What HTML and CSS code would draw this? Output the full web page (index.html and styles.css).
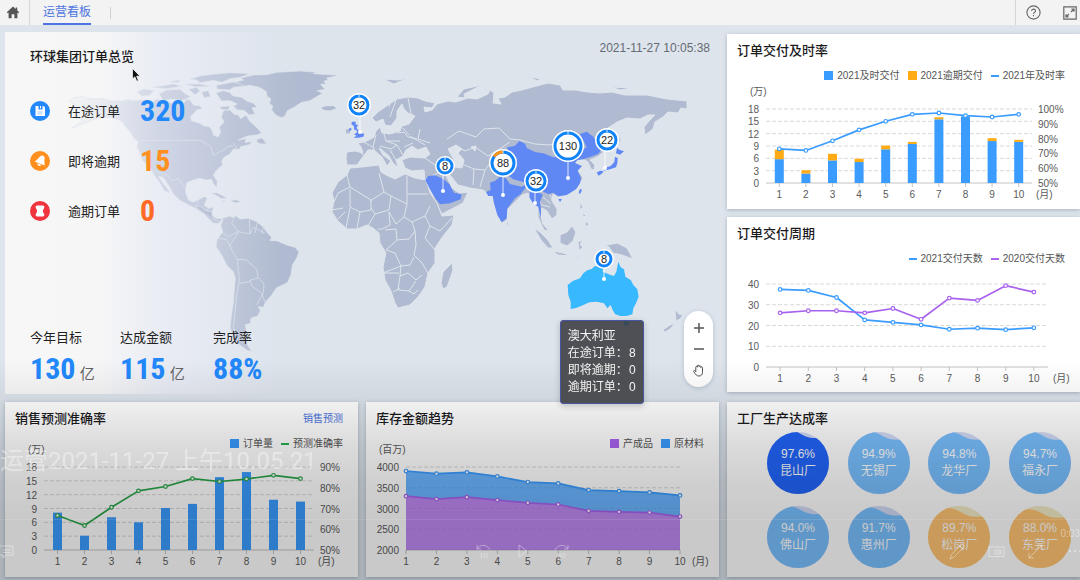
FILE: index.html
```html
<!DOCTYPE html>
<html lang="zh-CN">
<head>
<meta charset="utf-8">
<title>运营看板</title>
<link rel="stylesheet" href="styles.css">
</head>
<body>
<header class="topbar">
  <button class="icon-button home" type="button" aria-label="首页">
    <svg width="14" height="13" viewBox="0 0 14 13"><path d="M7 .6 .8 6.2l.9 1L2.600 6.500V12.200H5.600V8.300H8.400V12.200H11.400V6.500l.9.7.9-1L11.200 4.300V1.500H9.700V3Z" fill="#555"/></svg>
  </button>
  <nav class="tabs"><a class="tab" href="#board">运营看板</a></nav>
  <div class="tools">
    <button class="icon-button" type="button" aria-label="帮助">
      <svg width="15" height="15" viewBox="0 0 15 15" fill="none" stroke="#666" stroke-width="1.100"><circle cx="7.500" cy="7.500" r="6.600"/><path d="M5.600 6c0-2.600 3.900-2.500 3.900-.1 0 1.400-2 1.500-2 3M7.500 10v1.300"/></svg>
    </button>
    <button class="icon-button" type="button" aria-label="全屏">
      <svg width="14" height="14" viewBox="0 0 14 14" fill="none" stroke="#666" stroke-width="1.200"><path d="M.8.8h12.400v12.400H.8ZM8 6l3-3M8.300 3H11v2.700M6 8l-3 3M3 8.300V11h2.700"/></svg>
    </button>
  </div>
</header>

<main class="board" id="board">
  <section class="overview">
    <svg class="world" viewBox="5 32 714 362" role="img" aria-label="全球订单分布">
      <defs>
        <linearGradient id="land-west" gradientUnits="userSpaceOnUse" x1="180" y1="0" x2="900" y2="0">
          <stop offset="0" stop-color="#b0bad0" stop-opacity="0"/>
          <stop offset=".4" stop-color="#b0b9d2" stop-opacity=".42"/>
          <stop offset="1" stop-color="#b0bad0"/>
        </linearGradient>
        <linearGradient id="land-south" gradientUnits="userSpaceOnUse" x1="-100" y1="0" x2="310" y2="0">
          <stop offset="0" stop-color="#b0bad0" stop-opacity=".2"/>
          <stop offset="1" stop-color="#b0bad0"/>
        </linearGradient>
      </defs>

      <g class="land-west" transform="scale(.33333)">
        <path d="M205 302 228 292 250 290 275 297 305 295 330 302 365 303 385 299 400 302 430 300 455 306 470 298 500 302 515 310 540 305 552 308 560 298 572 302 580 315 600 318 608 325 590 330 580 342 572 348 574 362 600 370 612 378 628 380 636 390 640 405 655 411 662 395 658 382 672 366 664 352 668 338 672 331 690 330 702 342 715 345 722 356 738 345 748 362 768 380 785 399 770 405 742 408 715 420 738 416 735 428 756 424 748 434 722 440 718 448 700 447 690 462 672 472 665 484 668 494 650 510 640 525 652 545 650 563 640 550 635 538 618 540 600 535 580 540 560 548 556 575 565 600 580 607 600 597 612 590 622 594 612 615 625 625 640 622 636 645 648 655 667 656 658 668 642 660 625 645 605 638 585 624 560 612 538 600 520 582 505 555 490 532 474 528 488 548 505 570 510 578 493 572 478 545 460 522 450 500 428 482 420 460 412 440 415 425 402 415 392 396 378 382 364 362 330 352 300 352 272 362 235 378 215 385 236 370 250 360 228 352 238 340 225 332 242 322 222 312Z"/>
        <path d="M648 279 670 272 688 277 700 288 725 292 740 303 760 310 772 322 756 323 765 342 748 345 732 331 712 330 700 318 712 312 690 302 665 303ZM570 238 600 228 640 223 690 218 750 221 720 232 690 236 665 247 640 241 600 248 590 240ZM650 256 700 246 750 257 700 262 690 270 650 267ZM478 282 500 270 540 268 556 282 572 290 545 302 515 297 490 302ZM412 275 432 267 462 272 448 286 425 288ZM458 262 520 252 545 259 500 266ZM566 268 590 262 600 274 585 284ZM605 276 625 272 632 290 612 293ZM660 320 690 318 684 330 664 328ZM510 245 540 240 535 248ZM556 252 600 252 630 259 585 260Z"/>
        <path d="M705 246 730 240 722 234 760 225 800 224 830 217 900 213 950 217 940 221 1018 226 980 234 985 241 972 243 978 252 962 253 975 268 952 272 968 280 950 290 930 302 905 307 885 320 862 332 855 348 845 353 828 346 815 330 818 318 808 310 812 296 802 290 798 274 778 262 750 256 735 258Z"/>
        <path d="M962 323 975 318 1000 317 1012 325 990 333 970 330ZM770 418 786 414 800 431 785 432 772 428ZM632 580 650 578 682 594 665 596 648 586ZM690 600 712 600 722 606 705 609ZM663 602 677 604 670 607Z"/>
        <path class="border" d="M415 421H600L632 438 640 466 668 452 682 440 700 438M330 302 365 362 402 412M455 512 500 525 515 542 535 536 556 565M585 620 598 602M612 640 625 626M700 428 712 448"/>
      </g>

      <g class="land-south" transform="translate(180 50) scale(.33333)">
        <path d="M45 470 60 468 75 480 95 485 100 508 118 515 128 505 150 498 160 503 165 496 180 507 205 505 230 515 250 531 262 548 275 562 270 572 290 572 320 585 345 592 357 605 350 625 337 645 333 675 322 698 290 713 275 735 256 757 250 772 235 770 241 782 233 798 212 805 212 820 195 825 200 845 190 860 200 880 215 905 200 900 178 884 160 862 150 832 155 790 160 760 163 720 166 685 160 665 140 645 125 615 108 590 112 567 128 546 122 525 130 508 115 520 100 520 80 500 70 488Z"/>
        <path class="border" d="M165 498 155 520 175 545 210 552 208 505M210 552 220 532 255 550M232 516 225 550M250 532 245 552M175 548 150 585 155 600 172 628 200 630 230 658 235 684 210 690 215 708 245 730 255 756M112 565 140 568 150 590M172 628 178 690 170 735 165 790 160 830 175 880M178 700 210 695M235 684 252 702 250 728 230 765M128 548 145 560 175 545"/>
      </g>

      <g class="land">
        <path d="M347 152 355 151 363 153 361 147 358 143 364 142 369 140 374 137 376 131 380 127 382 133 390 134 400 131 402 126 409 124 415 116 408 113 404 109 402 104 397 111 397 118 391 126 385 125 383 119 376 122 372 118 378 112 388 105 397 99 408 97 418 98 425 101 435 103 432 108 424 107 425 112 432 110 437 104 448 101 456 102 468 98 477 99 488 94 490 90 494 93 493 103 501 104 498 98 505 97 512 92 522 90 533 87 548 83 560 85 563 90 575 90 587 92 600 93 612 92 625 95 647 95 667 99 687 101 687 109 681 108 678 113 668 112 663 117 655 122 653 129 645 135 644 127 650 120 655 115 648 115 640 119 627 118 617 122 608 128 611 134 612 141 608 148 600 155 597 157 590 160 595 165 594 170 591 169 588 162 583 159 575 162 582 166 578 170 583 178 577 188 567 195 558 197 553 194 552 201 557 209 557 215 552 219 547 211 542 208 540 213 543 224 549 231 544 230 538 217 538 207 533 203 528 193 522 195 517 200 507 210 507 220 502 223 495 207 492 195 487 193 483 190 470 188 458 185 450 175 445 173 452 188 459 193 468 192 463 203 442 214 438 207 431 192 425 180 424 170 412 171 405 168 402 160 410 157 425 158 430 154 426 147 418 150 412 146 406 150 403 156 396 160 398 168 393 163 389 156 382 150 379 148 383 155 391 161 387 166 382 157 374 150 368 150 362 158 357 165 347 165 346 158Z"/>
        <path d="M457 97 464 89 482 85 474 89 464 94 465 98ZM530 77 541 79 537 81ZM611 87 632 88 620 90ZM383 79 398 80 408 78 401 81 394 84ZM345 129 351 129 350 134 346 134ZM618 132 621 140 620 147ZM507 220 509 224 507 227ZM534 228 540 232 548 240 553 248 548 248 541 240ZM553 251 563 253 572 256 558 255ZM560 235 567 232 572 226 576 232 573 241 567 246 560 243ZM578 242 584 240 580 244 583 248 579 250ZM600 242 607 245 617 243 627 248 633 259 622 255 613 253 609 247ZM580 202 583 207 580 210ZM585 221 589 224 586 227ZM583 213 586 216 583 217ZM675 309 679 314 683 315 680 319 676 321ZM663 330 670 325 675 323 670 329 665 332ZM574 256 580 257 576 258Z"/>
        <path d="M350 168 362 167 379 165 381 172 388 176 395 179 405 174 415 178 426 180 430 193 437 203 442 216 454 215 452 225 443 236 435 248 435 263 428 273 425 287 418 297 410 305 398 308 395 303 391 291 385 280 383 267 386 253 380 243 379 233 373 228 367 225 357 229 347 229 338 221 332 212 334 200 332 193 338 182 347 175ZM452 263 453 270 447 287 443 289 441 283 443 272Z"/>
        <path class="border" d="M347 175 350 187 338 193 334 202M350 187 371 200 371 210 360 212 350 207 350 189M379 173 384 192 370 201M384 192 391 196 407 204 407 176M391 196 389 210 375 214 371 208M407 194H428M407 204 404 217 412 222 425 216 430 206M404 217 396 224 389 212M389 212 390 225 382 229 378 229M375 214 368 226M360 212 357 228M350 208 346 228M345 212 338 219M332 210 343 208M425 216 430 226 440 231 452 218M430 226 425 238 435 250M412 222 415 231 409 239 397 240 396 229 385 230M397 240 386 250 395 253 401 266 383 273M415 231 416 245 414 255 422 263 428 273M401 266 410 265 414 257M401 266 400 276 408 273 416 280 422 275M400 276 398 290 409 291 416 281M393 292 400 288M383 273H399M409 291 414 294 418 290"/>
        <path class="border" d="M361 153 366 157M364 142 374 148 374 152M376 135 373 147M384 134 386 141 397 145 391 149 380 146M397 133 404 132 408 137 417 139M386 141 400 141M403 128 409 135M389 107 392 98M408 98 411 114M396 100 390 117M404 147 413 143M397 145 403 155M390 150 396 160M410 136 425 145M420 129 418 139 430 143M447 139 459 131 476 137 484 129 499 128 510 139 520 140 535 144 550 145 565 140 583 137M455 145 465 151 475 147 488 156 498 150 510 142M462 164 474 169 485 170 493 159M474 169 473 185M485 170 480 187M425 158 438 167 450 170M425 180 436 174 443 169M442 203 451 201 462 193M535 196 542 205 550 207M543 197 551 204M550 195 554 204"/>
        <path class="water" d="M448 149 456 145 462 149 458 153 464 160 462 168 455 167 454 160ZM471 147 476 146 475 151Z"/>
      </g>

      <g class="active" transform="translate(420 60) scale(.33333)">
        <path d="M262 262 285 257 298 243 316 252 320 264 345 276 370 280 400 292 440 290 472 278 500 262 480 222 500 215 520 230 532 250 548 262 535 282 512 290 490 298 472 300 465 310 486 318 473 332 483 355 480 370 468 388 440 405 415 409 400 398 385 402 370 395 362 385 345 378 310 366 280 358 262 345 245 322 238 300 265 285Z"/>
        <path d="M210 368 226 362 240 350 258 355 270 372 305 380 320 372 318 382 302 402 285 415 262 445 260 475 245 487 232 465 222 430 218 408 205 408 198 396 212 390Z"/>
        <path d="M330 392 345 380 356 396 368 404 360 425 363 450 363 475 355 440 340 432 328 412Z"/>
        <path d="M16 360 25 348 45 346 70 357 88 372 102 398 125 403 122 418 90 430 60 433 48 418 30 388Z"/>
        <path d="M591 264 598 269 612 274 600 284 588 280ZM585 290 593 294 592 310 588 322 570 328 550 332 560 322 572 318 583 306ZM530 338 540 332 551 334 545 341 536 347ZM481 386 486 390 480 403 476 397ZM415 417 426 417 420 426Z"/>
        <path d="M-204 185-192 185-194 192-186 196-191 204-182 214-178 219-167 222-170 230-184 233-200 233-190 227-198 223-190 218-189 212-198 208-198 199-206 192ZM-214 206-206 204-206 211-213 212Z"/>
      </g>
      <path class="hovered" transform="translate(500 230) scale(.33333)" d="M203 165 218 153 240 145 250 130 262 121 275 117 285 108 300 112 312 112 308 125 330 134 342 138 349 125 355 95 362 112 372 118 376 140 392 150 400 165 412 178 416 200 408 220 400 235 397 253 380 258 360 258 345 252 338 240 332 225 322 235 312 220 290 215 268 217 245 227 228 234 212 237 212 215 205 195ZM370 272 380 275 388 272 387 282 380 288 373 285Z"/>
      <g id="markers"></g>
    </svg>

    <div class="overview-head">
      <h1>环球集团订单总览</h1>
      <time datetime="2021-11-27T10:05:38">2021-11-27 10:05:38</time>
    </div>
    <ul class="orders">
      <li>
        <svg width="20" height="20" viewBox="0 0 20 20"><circle cx="10" cy="10" r="10" fill="#2288fb"/><path d="M5.500 5h3v3.500h4V5h1L15 6.500V15H5.500ZM10 5h1v2.500h-1Z" fill="#fff"/><path d="M7.500 11h5.500M7.500 12.800h4.500" stroke="#8fc0fb" stroke-width=".8"/></svg>
        <span>在途订单</span><strong class="figure">320</strong>
      </li>
      <li>
        <svg width="20" height="20" viewBox="0 0 20 20"><circle cx="10" cy="10" r="10" fill="#ff8f1f"/><path d="M12.500 4.500c2 .3 2.300 2.200 2 4.300-.3 2 .2 4 .2 5.700L4.500 10.500c3-.8 4-5.500 8-6ZM7.300 12.300l4 1.700c-1 2-4 1-4-1.700Z" fill="#fff"/></svg>
        <span>即将逾期</span><strong class="figure amber">15</strong>
      </li>
      <li>
        <svg width="20" height="20" viewBox="0 0 20 20"><circle cx="10" cy="10" r="10" fill="#f0343f"/><path d="M7 4.500h6c1.500 0 1.800 2 .8 3.200-1.300 1.600-1.300 3 0 4.600 1 1.200.7 3.200-.8 3.200H7c-1.500 0-1.800-2-.8-3.200 1.300-1.600 1.300-3 0-4.600C5.200 6.500 5.500 4.500 7 4.500Z" fill="#fff"/></svg>
        <span>逾期订单</span><strong class="figure red">0</strong>
      </li>
    </ul>
    <dl class="goals">
      <div><dt>今年目标</dt><dd><strong class="figure">130</strong> 亿</dd></div>
      <div><dt>达成金额</dt><dd><strong class="figure">115</strong> 亿</dd></div>
      <div><dt>完成率</dt><dd><strong class="figure">88%</strong></dd></div>
    </dl>

    <div class="map-tools">
      <button type="button" aria-label="放大"><svg width="12" height="12" viewBox="0 0 12 12"><path d="M1 6h10M6 1v10" stroke="#555" stroke-width="1.500"/></svg></button>
      <button type="button" aria-label="缩小"><svg width="12" height="12" viewBox="0 0 12 12"><path d="M1 6h10" stroke="#555" stroke-width="1.500"/></svg></button>
      <button type="button" aria-label="拖动"><svg width="13" height="13" viewBox="0 0 13 13" fill="none" stroke="#555"><path d="M3.800 7.800V3.200c0-1.200 1.600-1.200 1.600 0V2c0-1.200 1.700-1.200 1.700 0v.6c0-1.200 1.700-1.200 1.700 0v1c0-1.200 1.700-1 1.700.2v4.500c0 2.500-1.500 3.700-3.500 3.700-2.500 0-3-1.200-5.200-4.200-.7-1 .6-1.800 1.300-1Z"/></svg></button>
    </div>
    <div class="tooltip">
      <p>澳大利亚</p>
      <p><span>在途订单：</span><span>8</span></p>
      <p><span>即将逾期：</span><span>0</span></p>
      <p><span>逾期订单：</span><span>0</span></p>
    </div>
    <svg class="cursor" width="9" height="14" viewBox="0 0 9 14"><path d="M.5.500V11l2.400-2.200 1.800 4.400 1.700-.7L4.600 8.200H8Z" fill="#111" stroke="#fff" stroke-width=".7"/></svg>
  </section>

  <div class="side">
    <section class="card">
      <header><h2>订单交付及时率</h2></header>
      <div class="legend"><span class="key square blue">2021及时交付</span><span class="key square yellow">2021逾期交付</span><span class="key dash blue">2021年及时率</span></div>
      <svg class="chart" id="on-time" viewBox="0 0 353 125"></svg>
    </section>
    <section class="card">
      <header><h2>订单交付周期</h2></header>
      <div class="legend"><span class="key dash blue">2021交付天数</span><span class="key dash purple">2020交付天数</span></div>
      <svg class="chart" id="cycle" viewBox="0 0 353 125"></svg>
    </section>
  </div>

  <section class="card">
    <header><h2>销售预测准确率</h2><a href="#forecast">销售预测</a></header>
    <div class="legend"><span class="key square blue">订单量</span><span class="key dash green">预测准确率</span></div>
    <svg class="chart" id="forecast" viewBox="0 0 353 125"></svg>
  </section>
  <section class="card">
    <header><h2>库存金额趋势</h2></header>
    <div class="legend"><span class="key square purple">产成品</span><span class="key square blue">原材料</span></div>
    <svg class="chart" id="stock" viewBox="0 0 353 125"></svg>
  </section>
  <section class="card">
    <header><h2>工厂生产达成率</h2></header>
    <div class="plants" id="plants"></div>
  </section>
</main>

<div class="player">
  <p class="clip-title">运营2021-11-27 上午10.05.21</p>
  <div class="progress"></div>
  <span class="remaining">0:03</span>
  <div class="controls">
    <button type="button" aria-label="字幕"><svg width="20" height="16" viewBox="0 0 20 16"><path d="M0 2h13v9H6l-3 3v-3H0M3 6h8M3 8.500h8"/></svg></button>
    <div class="transport">
      <button type="button" aria-label="后退"><svg width="17" height="17" viewBox="0 0 17 17"><path d="M2 6c3-5 10-5 13 1M2 2v4h4"/><text x="4" y="15">10</text></svg></button>
      <button type="button" aria-label="播放"><svg width="17" height="17" viewBox="0 0 17 17"><path d="M5 2v12l8-6Z"/></svg></button>
      <button type="button" aria-label="前进"><svg width="17" height="17" viewBox="0 0 17 17"><path d="M15 6C12 1 5 1 2 7M15 2v4h-4"/><text x="4" y="15">30</text></svg></button>
    </div>
    <div class="extras">
      <button type="button" aria-label="编辑"><svg width="17" height="17" viewBox="0 0 17 17"><path d="M1 16l1.500-4.500L12 2c2-1.500 4 .8 2.500 2.700L5 14ZM11 3l3 3"/></svg></button>
      <button type="button" aria-label="画中画"><svg width="17" height="17" viewBox="0 0 17 17"><path d="M1 4h15v9.500H1ZM7 7h6v4H7ZM9 9h3"/></svg></button>
      <button type="button" aria-label="全屏播放"><svg width="17" height="17" viewBox="0 0 17 17"><path d="M2 15 15 2M10 2h5v5M2 10v5h5"/></svg></button>
      <button type="button" aria-label="更多"><svg width="17" height="17" viewBox="0 0 17 17"><path d="M3 8h2M8 8h2M13 8h2" stroke-width="2"/></svg></button>
    </div>
  </div>
</div>
<script src="charts.js"></script>
</body>
</html>
```
FILE: styles.css
```css
* { box-sizing: border-box; }
body, h1, h2, p, ul, dl, dd { margin: 0; padding: 0; }
body {
  display: flex;
  flex-direction: column;
  min-height: 100vh;
  background: #dde4ec;
  color: #222;
  font: 12px/18px "Liberation Sans", "Noto Sans CJK SC", sans-serif;
}
button { padding: 0; border: 0; background: none; color: inherit; font: inherit; }
button svg { display: block; }
a { text-decoration: none; }
h1, h2 { font-size: 13px; line-height: 18px; font-weight: 500; color: #1b1b1d; }

.topbar { display: flex; height: 25px; background: #f3f3f3; }
.icon-button { display: flex; align-items: center; justify-content: center; }
.home { width: 30px; padding-right: 3px; border-right: 1px solid #d6d6d6; }
.tabs { display: flex; align-items: center; margin-left: 13px; }
.tabs::after { content: ""; width: 1px; height: 12px; margin-left: 19px; background: #d0d0d0; }
.tab { height: 25px; line-height: 24px; color: #4d74e0; border-bottom: 2px solid #4d74e0; }
.tools { display: flex; gap: 22px; margin-left: auto; padding: 0 3px 0 10px; border-left: 1px solid #d6d6d6; }

.board {
  flex: 1;
  display: grid;
  grid-template-columns: repeat(3, minmax(0, 1fr));
  grid-template-rows: 362fr 175fr;
  gap: 8px;
  padding: 7px 0 3px 5px;
}
.overview {
  grid-column: span 2;
  position: relative;
  display: flex;
  flex-direction: column;
  padding: 7px 9px 5px 25px;
  background: linear-gradient(90deg, #f7f7f7, #f6f6f7 95px, #e9ecf4 155px, #e5e9f2 200px, #dde4ec 275px);
}
.world { position: absolute; inset: 0; width: 100%; height: 100%; }
.world path { stroke: #dfe5ed; stroke-width: 1; }
.world g[transform] path { stroke-width: 2; }
.land path { fill: #b0bad0; }
.land-west path { fill: url(#land-west); }
.land-south path { fill: url(#land-south); }
.world .border { fill: none; }
.world .water { fill: #dde4ec; }
.world .active path { fill: #5f88f5; stroke: none; }
.world .hovered { fill: #38b8ff; stroke: none; }
.world .pin { stroke: #fff; stroke-opacity: .8; }
.world .pin-dot { fill: #fff; }
.world .halo { fill: #fff; }
.world .ring { fill: none; stroke: #1183fa; stroke-width: 3; }
.world .late { fill: none; stroke: #ff9416; stroke-width: 3; }
.world text { font-size: 11px; text-anchor: middle; fill: #222; }

.overview-head { position: relative; display: flex; justify-content: space-between; align-items: flex-start; }
.overview-head h1 { margin-top: 9px; }
time { color: #666b73; }
.orders { position: relative; display: grid; gap: 22px; margin-top: 31px; list-style: none; }
.orders li { display: flex; align-items: center; height: 28px; font-size: 13px; }
.orders span { margin: 2px 20px 0 18px; }
.figure { font: bold 30px/28px "Roboto Condensed", "Liberation Sans Narrow", "Liberation Sans", sans-serif; color: #2288fb; }
.figure.amber { color: #ff8f1f; }
.figure.red { color: #ff6a26; }
.goals { position: relative; display: grid; grid-template-columns: 90px 93px auto; margin-top: auto; font-size: 13px; }
.goals dd { margin-top: 8px; font-size: 15px; line-height: 30px; color: #666; white-space: nowrap; }

.map-tools {
  position: absolute;
  right: 6px;
  bottom: 7px;
  display: flex;
  flex-direction: column;
  gap: 1px;
  padding: 7px 4px;
  border-radius: 15px;
  background: #fff;
  box-shadow: 0 1px 4px rgba(60, 80, 110, .25);
}
.map-tools button { display: grid; place-items: center; width: 21px; height: 20px; }
.tooltip {
  position: absolute;
  left: 77.7%;
  top: 79.5%;
  z-index: 3;
  width: 84px;
  padding: 7px;
  border: 1px solid #4656a0;
  border-radius: 3px;
  background: rgba(56, 56, 59, .86);
  color: #f4f4f4;
  line-height: 17px;
  box-shadow: 0 2px 6px rgba(0, 0, 0, .2);
}
.tooltip p { display: flex; justify-content: space-between; white-space: nowrap; }
.tooltip span:first-child { width: 56px; }
.cursor { position: absolute; left: 127px; top: 36px; }

.side { display: flex; flex-direction: column; gap: 8px; padding: 2px 0; }
.card { flex: 1; display: flex; flex-direction: column; background: #fff; box-shadow: 0 1px 4px rgba(70, 85, 110, .35); }
.card header { display: flex; justify-content: space-between; align-items: center; height: 33px; padding: 0 15px 0 10px; }
.card header a { font-size: 10px; color: #4d74e0; }
.legend { display: flex; justify-content: flex-end; gap: 8px; height: 17px; padding-right: 15px; font-size: 10px; line-height: 17px; color: #555; }
.key { display: flex; align-items: center; gap: 4px; }
.key::before { content: ""; width: 9px; height: 9px; background: currentColor; }
.key.dash::before { width: 8px; height: 2px; }
.key.blue::before { background: #3a9cff; }
.key.yellow::before { background: #ffab15; }
.key.purple::before { background: #aa63f0; }
.key.green::before { background: #29b04c; }

.chart { display: block; flex: 1; width: 100%; min-height: 0; overflow: visible; }
.chart text { font-size: 10px; fill: #5a5a5a; }
.chart .end { text-anchor: end; }
.chart .mid { text-anchor: middle; }
.chart .grid { stroke: #d9d9d9; stroke-dasharray: 4 2; }
.chart .axis { stroke: #c4c4c4; }
.chart polyline { fill: none; stroke-width: 1.7; stroke-linejoin: round; }

.plants { display: grid; grid-template-columns: repeat(4, 62px); justify-content: space-between; row-gap: 12px; margin-top: -3px; padding: 0 9px 0 40px; }
.plant { position: relative; display: flex; flex-direction: column; align-items: center; justify-content: center; height: 62px; border-radius: 50%; overflow: hidden; color: #fff; line-height: 17px; }
.plant svg { position: absolute; inset: 0; width: 100%; height: 100%; }
.plant span { position: relative; }

.player {
  position: fixed;
  inset: auto 0 0;
  z-index: 2;
  display: flex;
  flex-direction: column;
  height: 220px;
  padding-top: 86px;
  pointer-events: none;
  color: rgba(255, 255, 255, .38);
  background: linear-gradient(rgba(0, 0, 0, 0), rgba(0, 0, 0, .06) 42px, rgba(0, 0, 0, .14) 85px, rgba(0, 0, 0, .19) 125px, rgba(0, 0, 0, .21) 160px);
}
.clip-title { font: 24px/30px Roboto, "Noto Sans CJK SC", sans-serif; white-space: nowrap; }
.progress { height: 1px; margin-top: 43px; background: rgba(255, 255, 255, .1); }
.remaining { align-self: flex-end; margin-top: 5px; font-size: 10px; }
.controls { display: grid; grid-template-columns: 1fr auto 1fr; align-items: center; }
.controls svg { fill: none; stroke: currentColor; }
.controls text { font-size: 8px; fill: currentColor; stroke: none; }
.transport, .extras { display: flex; gap: 22px; }
.transport { margin-right: 36px; }
.extras { justify-self: end; margin-right: -3px; }
```
FILE: charts.js
```javascript
const BLUE = '#3a9cff', YELLOW = '#ffab15', PURPLE = '#a862ee', GREEN = '#29a549';

const scale = (v, c, range) => c.bottom - (v - range[0]) / (range[1] - range[0]) * (c.bottom - c.top);
const text = (x, y, s, cls = '') => `<text x="${x}" y="${y}" class="${cls}">${s}</text>`;

function xAt(c, i) {
  const width = c.right - c.left;
  return c.edge ? c.left + width / 9 * i : c.left + width / 10 * (i + 0.5);
}

function frame(c) {
  let out = '';
  for (let v = c.range[0]; v <= c.range[1]; v += c.step) {
    const y = scale(v, c, c.range);
    out += `<line class="${v === c.range[0] ? 'axis' : 'grid'}" x1="${c.left}" x2="${c.right}" y1="${y}" y2="${y}"/>`;
    out += text(c.left - 7, y + 4, v, 'end');
  }
  if (c.percent) {
    for (let v = c.percent[0]; v <= c.percent[1]; v += 10) {
      out += text(c.right + 6, scale(v, c, c.percent) + 4, v + '%');
    }
  }
  for (let i = 0; i < 10; i++) {
    const x = xAt(c, i);
    out += `<line class="axis" x1="${x}" x2="${x}" y1="${c.bottom}" y2="${c.bottom + 4}"/>`;
    out += text(x, c.bottom + 15, i + 1, 'mid');
  }
  out += text(c.monthX, c.bottom + 15, '(月)');
  if (c.unit) out += text(c.unitX, c.unitY, c.unit);
  return out;
}

function bars(c, values, color, from = []) {
  return values.map((v, i) => {
    const y = scale(v, c, c.range), base = scale(from[i] || 0, c, c.range);
    return `<rect x="${xAt(c, i) - 4.5}" y="${y}" width="9" height="${base - y}" fill="${color}"/>`;
  }).join('');
}

function line(c, values, color, range = c.range) {
  const pts = values.map((v, i) => [xAt(c, i), scale(v, c, range)]);
  return `<polyline points="${pts.join(' ')}" stroke="${color}"/>` +
    pts.map(([x, y]) => `<circle cx="${x}" cy="${y}" r="1.8" fill="#fff" stroke="${color}" stroke-width="1.2"/>`).join('');
}

function area(c, values, floor, color) {
  const up = values.map((v, i) => [xAt(c, i), scale(v, c, c.range)]);
  const down = floor.map((v, i) => [xAt(c, i), scale(v, c, c.range)]).reverse();
  return `<polygon points="${up.concat(down).join(' ')}" fill="${color}" fill-opacity=".75"/>`;
}

const draw = (id, s) => { document.getElementById(id).innerHTML = s; };

const onTime = { left: 39, right: 305, top: 25, bottom: 99, range: [0, 18], step: 3, percent: [50, 100], monthX: 309, unit: '(万)', unitX: 23, unitY: 11 };
const good = [5.8, 2.3, 5.5, 5.1, 8.2, 9.5, 15.5, 16.2, 10.2, 10];
const total = [8.1, 3.1, 7.1, 5.9, 9.1, 10, 16, 16.2, 10.9, 10.5];
draw('on-time', frame(onTime) + bars(onTime, good, BLUE) + bars(onTime, total, YELLOW, good) +
  line(onTime, [73.1, 72, 78.5, 85.9, 91.7, 96.4, 97.3, 95.5, 94.6, 96.4], BLUE, onTime.percent));

const cycle = { left: 39, right: 321, top: 17, bottom: 100, range: [0, 40], step: 10, monthX: 326 };
draw('cycle', frame(cycle) +
  line(cycle, [37.4, 36.9, 33.5, 22.7, 21.5, 20.3, 18.2, 18.7, 18, 18.9], BLUE) +
  line(cycle, [26.1, 27.1, 27.1, 26.1, 28.2, 23, 33.2, 32.1, 39.2, 36.1], PURPLE));

const forecast = { left: 39, right: 309, top: 15, bottom: 98, range: [0, 18], step: 3, percent: [50, 90], monthX: 313, unit: '(万)', unitX: 23, unitY: 1 };
draw('forecast', frame(forecast) + bars(forecast, [8.1, 3.1, 7.1, 6, 9.1, 10, 15.8, 16.9, 10.9, 10.5], BLUE) +
  line(forecast, [66.6, 61.8, 70.6, 78.5, 80.6, 84.4, 83, 84.2, 86, 84.4], GREEN, forecast.percent));

const stock = { left: 40, right: 314, top: 15, bottom: 98, edge: true, range: [2000, 4000], step: 500, monthX: 326, unit: '(百万)', unitX: 13, unitY: 1 };
const raw = [3903, 3839, 3871, 3774, 3637, 3605, 3444, 3419, 3387, 3315];
const finished = [3298, 3226, 3274, 3202, 3137, 3097, 2944, 2919, 2903, 2806];
draw('stock', frame(stock) + area(stock, raw, finished, BLUE) + area(stock, finished, finished.map(() => 2000), PURPLE) +
  line(stock, raw, BLUE) + line(stock, finished, PURPLE));

const plants = [
  ['昆山厂', 97.6, '#2265fb'], ['无锡厂', 94.9, '#79c0ff'], ['龙华厂', 94.8, '#79c0ff'], ['福永厂', 94.7, '#79c0ff'],
  ['佛山厂', 94.0, '#79c0ff'], ['惠州厂', 91.7, '#79c0ff'], ['松岗厂', 89.7, '#ffc472'], ['东莞厂', 88.0, '#ffc472']
];
draw('plants', plants.map(([name, rate, color]) => {
  const drop = (100 - rate) * 0.6;
  const back = color === '#ffc472' ? '#f4ecc8' : '#d3dcf8';
  return `<div class="plant"><svg viewBox="0 0 62 62"><rect width="62" height="62" fill="${back}"/>` +
    `<path d="M0 ${drop + 1}C12 ${drop - 3} 20 ${drop - 7} 31 ${drop - 1}S44 ${drop + 6} 62 ${drop + 3}V62H0Z" fill="${color}"/></svg>` +
    `<span>${rate.toFixed(1)}%</span><span>${name}</span></div>`;
}).join(''));

const markers = [
  [359, 105, 11, 32, 360, 132], [445, 166, 9, 8, 443, 191], [503, 163, 13, 88, 503, 195],
  [536, 181, 11, 32, 535, 203], [568, 146, 15, 130, 568, 178], [607, 140, 11, 22, 605, 168], [604, 259, 9, 8, 604, 279]
];
draw('markers', markers.map(([x, y, r, n, px, py]) => {
  const k = r - 2;
  const late = n === 88 ? `<path class="late" d="M${x - k * 0.82} ${y - k * 0.57}A${k} ${k} 0 0 1 ${x} ${y - k}"/>` : '';
  return `<line class="pin" x1="${px}" x2="${px}" y1="${y + r}" y2="${py}"/><circle class="pin-dot" cx="${px}" cy="${py}" r="2"/>` +
    `<circle class="halo" cx="${x}" cy="${y}" r="${r + 1}"/><circle class="ring" cx="${x}" cy="${y}" r="${k}"/>${late}` +
    `<line class="pin" x1="${x}" x2="${x}" y1="${y - r}" y2="${y - r + 3}"/>` + text(x, y + 4, n);
}).join(''));
```
